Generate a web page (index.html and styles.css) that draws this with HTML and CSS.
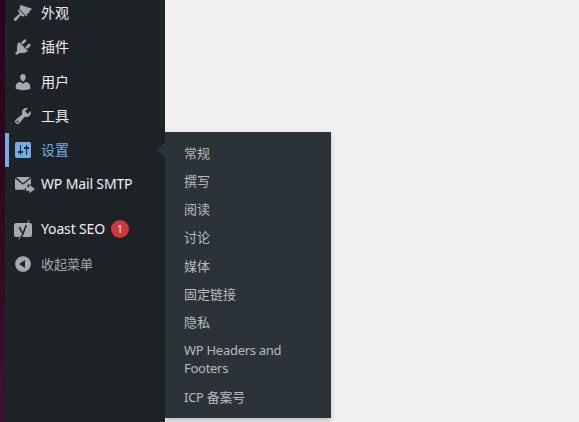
FILE: index.html
```html
<!DOCTYPE html>
<html lang="zh-CN">
<head>
    <meta charset="UTF-8">
    <title>设置</title>
    <link rel="stylesheet" href="styles.css">
</head>
<body>
    <div class="desktop-edge"></div>
    <nav class="sidebar">
        <ul class="menu">
            <li class="menu-item">
                <svg class="icon" viewBox="0 0 20 20"><path d="M7.300 2 19.700 6.100 16.700 7.500 16.300 9.900 14.200 10.600 13.700 13.400 6.500 6z"/><path d="M5.600 6.200 12.100 12.900 9.800 13.600 7.600 12.300 3.700 17.300C2.700 18.400 1 18 .9 16.600 .8 15.800 1.300 15.200 2 14.700L6.900 10.200 5 8.200z"/></svg>
                <span class="label">外观</span>
            </li>
            <li class="menu-item">
                <svg class="icon" viewBox="0 0 20 20"><path d="M13.11 4.36L9.87 7.6 8 5.73l3.24-3.24c.35-.34 1.05-.2 1.56.32.52.51.66 1.21.31 1.55zm-8 1.77l.91-1.12 9.01 9.01-1.19.84c-.71.71-2.63 1.16-3.82 1.16H6.14L4.9 17.26c-.59.59-1.54.59-2.12 0-.59-.58-.59-1.53 0-2.12l1.24-1.24v-3.88c0-1.13.4-3.19 1.09-3.89zm7.26 3.97l3.24-3.24c.34-.35 1.04-.21 1.55.31.52.51.66 1.21.31 1.55l-3.24 3.25z"/></svg>
                <span class="label">插件</span>
            </li>
            <li class="menu-item">
                <svg class="icon" viewBox="0 0 20 20"><path d="M10 9.25c-2.27 0-2.73-3.44-2.73-3.44C7 4.02 7.82 2 9.97 2c2.16 0 2.98 2.02 2.71 3.81 0 0-.41 3.44-2.68 3.44zm0 2.57L12.72 10c2.39 0 4.52 2.33 4.52 4.53v2.49s-3.65 1.13-7.24 1.13c-3.65 0-7.24-1.13-7.24-1.13v-2.49c0-2.25 1.94-4.48 4.47-4.48z"/></svg>
                <span class="label">用户</span>
            </li>
            <li class="menu-item">
                <svg class="icon" viewBox="0 0 20 20"><path d="M16.68 9.77c-1.34 1.34-3.3 1.67-4.95.99l-5.41 6.52c-.99.99-2.59.99-3.58 0s-.99-2.59 0-3.57l6.52-5.42c-.68-1.65-.35-3.61.99-4.95 1.28-1.28 3.12-1.62 4.72-1.06l-2.89 2.89 2.82 2.82 2.86-2.87c.53 1.58.18 3.39-1.08 4.65zM3.81 16.21c.4.39 1.04.39 1.43 0 .4-.4.4-1.04 0-1.43-.39-.4-1.03-.4-1.43 0-.39.39-.39 1.03 0 1.43z"/></svg>
                <span class="label">工具</span>
            </li>
            <li class="menu-item active">
                <svg class="icon" viewBox="0 0 20 20"><rect x="2" y="2" width="16" height="16" rx="2"/><path class="slider-marks" d="M7 5H8V11H10V13H8V15H7V13H5V11H7zM13 5H14V7H16V9H14V15H13V9H11V7H13z"/></svg>
                <span class="label">设置</span>
            </li>
            <li class="menu-item">
                <svg class="icon" viewBox="0 0 20 20"><path d="M3 3H17.500L10 9.200zM2 4.200 10 10.800 18 4.200V10.500H14.500V14H12V15.800H3.500C2.600 15.800 2 15.200 2 14.300z"/><path d="M16.300 10.800 22 15 16.300 19.200V16.800H13V13.200H16.300z"/></svg>
                <span class="label latin">WP Mail SMTP</span>
            </li>
            <li class="menu-item separated">
                <svg class="icon" viewBox="0 0 20 20"><rect x="1" y="4" width="18" height="14" rx="2"/><path class="yoast-y" d="M6.300 8.200 9.400 14.200M13.300 6 9.300 16.500C8.900 17.300 8.400 17.600 7.300 17.700"/><path class="yoast-slash" d="M16 1 14.500 5M7.500 18.500 5.500 20"/></svg>
                <span class="label latin">Yoast SEO</span>
                <span class="badge">1</span>
            </li>
            <li class="menu-item collapse">
                <svg class="icon" viewBox="0 0 20 20"><path d="M10 2.16c4.33 0 7.84 3.51 7.84 7.84s-3.51 7.84-7.84 7.84S2.16 14.33 2.16 10 5.71 2.16 10 2.16zm2 11.72V6.12L6.18 9.97z"/></svg>
                <span class="label">收起菜单</span>
            </li>
        </ul>
    </nav>

    <ul class="flyout">
        <li>常规</li>
        <li>撰写</li>
        <li>阅读</li>
        <li>讨论</li>
        <li>媒体</li>
        <li>固定链接</li>
        <li>隐私</li>
        <li class="latin-sub">WP Headers and Footers</li>
        <li class="latin-sub last-sub">ICP 备案号</li>
    </ul>
</body>
</html>
```

FILE: styles.css
```css
html, body {
    height: 100%;
}

body {
    margin: 0;
    display: flex;
    position: relative;
    overflow: hidden;
    background: #f0f0f1;
    font-family: "Noto Sans", "Noto Sans CJK SC", sans-serif;
}

ul {
    list-style: none;
    margin: 0;
    padding: 0;
}

.desktop-edge {
    width: 5px;
    background: linear-gradient(180deg, #2c001e, #33061f 45%, #3f1030);
}

.sidebar {
    width: 160px;
    background: #1d2327;
}

.menu {
    margin-top: -3.8px;
}

.menu-item {
    height: 34.2px;
    display: flex;
    align-items: center;
    font-size: 14px;
    color: #f0f0f1;
}

.label {
    line-height: 18.2px;
}

.latin {
    letter-spacing: -0.15px;
}

.icon {
    width: 20px;
    height: 20px;
    margin: 0 8px;
    flex-shrink: 0;
    fill: #a7aaad;
    overflow: visible;
}

.menu-item.active {
    color: #72aee6;
    box-shadow: inset 4px 0 0 #72aee6;
}

.menu-item.active .icon {
    fill: #72aee6;
}

.menu-item.active .slider-marks {
    fill: #1d2327;
}

.separated {
    margin-top: 11px;
}

.collapse {
    margin-top: 0.3px;
    font-size: 13px;
    color: #a7aaad;
}

.yoast-y {
    fill: none;
    stroke: #1d2327;
    stroke-width: 1.6;
}

.yoast-slash {
    fill: none;
    stroke: #a7aaad;
    stroke-width: 1;
}

.badge {
    width: 18px;
    height: 18px;
    margin-left: 6px;
    border-radius: 50%;
    background: #d63638;
    color: #fff;
    font-size: 11px;
    line-height: 18px;
    text-align: center;
}

.flyout {
    position: absolute;
    left: 165px;
    top: 132px;
    width: 166px;
    box-sizing: border-box;
    padding: 6.7px 0 6.6px;
    background: #2c3338;
    box-shadow: 0 3px 5px rgba(0, 0, 0, 0.2);
}

.flyout::before {
    content: "";
    position: absolute;
    left: -8px;
    top: 10px;
    border: 8px solid transparent;
    border-left: 0;
    border-right-color: #2c3338;
}

.flyout li {
    padding: 5px 30px 5px 19px;
    font-size: 13px;
    line-height: 18.2px;
    color: #b8bcbf;
}

.flyout .latin-sub {
    letter-spacing: -0.28px;
}

.flyout .last-sub {
    padding-top: 5.7px;
}
```
